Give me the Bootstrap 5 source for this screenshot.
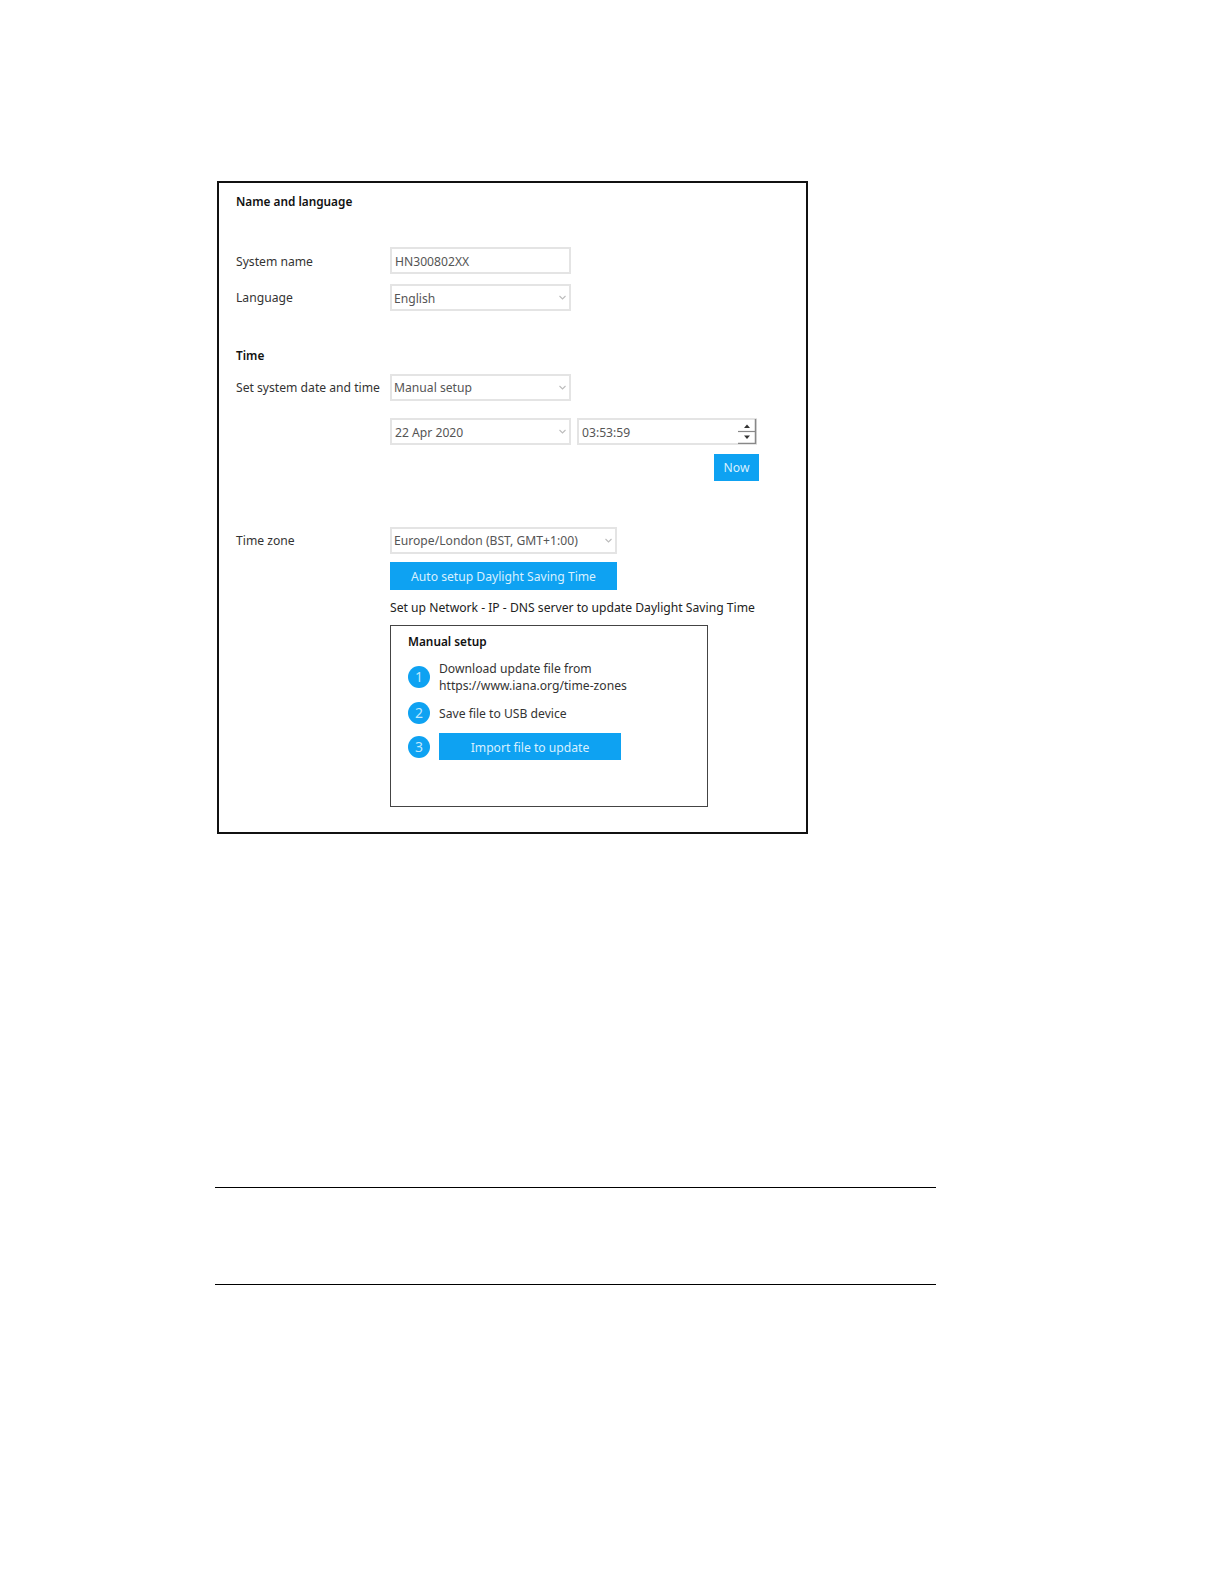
<!DOCTYPE html>
<html lang="en">
<head>
<meta charset="utf-8">
<title>System settings</title>
<link href="https://cdn.jsdelivr.net/npm/bootstrap@5.3.0/dist/css/bootstrap.min.css" rel="stylesheet">
<style>
body { background:#fff; color:#333; font-family:"Noto Sans","Open Sans",sans-serif; font-size:12.15px; line-height:20px; }
.sheet { padding:181px 0 0 217px; }
.frame { width:591px; height:653px; border:2px solid #111; padding:10px 0 0 17px; }
.sect-title { font-weight:600; font-size:11.8px; line-height:17px; color:#111; height:20px; }
.form-row { display:flex; align-items:center; height:27px; }
.gap-sys { margin-top:34px; }
.gap-lang { margin-top:10px; }
.gap-time { margin-top:36px; }
.gap-set { margin-top:7px; }
.gap-date { margin-top:17px; }
.gap-tz { margin-top:46px; }
.lbl { width:154px; flex:none; white-space:nowrap; padding-top:1px; }
.lbl-low { padding-top:2px; }
.fld.form-control, .fld.form-select { width:181px; height:27px; min-height:0; flex:none; border:2px solid #e4e4e4; border-radius:0; font-size:12.15px; line-height:20px; padding:1px 0 0 3px; color:#555; box-shadow:none; }
.fld.form-select { padding-left:2px; background-size:9px 7px; background-position:right 2px center; background-image:url("data:image/svg+xml,%3csvg xmlns='http://www.w3.org/2000/svg' viewBox='0 0 9 7'%3e%3cpath fill='none' stroke='%23bcbcbc' stroke-width='1.1' d='M1.500 2l3 3 3-3'/%3e%3c/svg%3e"); }
.fld-wide.form-select { width:227px; }
.date-pick.form-select { padding-left:3px; padding-top:3px; }
.lang-pick.form-select { padding-top:3px; }
.time-wrap { position:relative; margin-left:6px; flex:none; }
.time-wrap .fld { width:180px; }
.spin { position:absolute; top:1px; right:0; width:20px; height:25px; }
.btn-sky.btn { background:#0ea2f2; border:0; border-radius:0; color:#d8f0ff; font-size:12.15px; line-height:20px; padding:1px 0 0; display:flex; align-items:center; justify-content:center; }
.btn-now { width:45px; height:27px; margin:9px 0 0 478px; }
.btn-auto { width:227px; height:28px; margin:8px 0 0 154px; }
.hint { margin:8px 0 0 154px; white-space:nowrap; color:#222; }
.manual { width:318px; height:182px; margin:7px 0 0 154px; border:1px solid #444; padding:7px 0 0 17px; }
.step-row { display:flex; align-items:center; gap:9px; }
.step-one { margin-top:7px; }
.step-two { margin-top:8px; }
.step-three { margin-top:9px; }
.num { width:22px; height:22px; flex:none; border-radius:50%; background:#0ea2f2; color:#bfe8ff; font-size:14px; display:flex; align-items:center; justify-content:center; }
.step-txt { line-height:17px; white-space:nowrap; }
.btn-imp.btn { width:182px; height:27px; padding-top:2px; }
.rule { width:721px; height:1px; background:#000; margin:0 0 0 215px; }
.rule-a { margin-top:353px; }
.rule-b { margin-top:96px; }
</style>
</head>
<body>
<div class="sheet">
  <div class="frame">
    <div class="sect-title">Name and language</div>
    <div class="form-row gap-sys">
      <div class="lbl lbl-low">System name</div>
      <input class="form-control fld" type="text" value="HN300802XX">
    </div>
    <div class="form-row gap-lang">
      <div class="lbl">Language</div>
      <select class="form-select fld lang-pick"><option>English</option></select>
    </div>
    <div class="sect-title gap-time">Time</div>
    <div class="form-row gap-set">
      <div class="lbl">Set system date and time</div>
      <select class="form-select fld"><option>Manual setup</option></select>
    </div>
    <div class="form-row gap-date">
      <div class="lbl"></div>
      <select class="form-select fld date-pick"><option>22 Apr 2020</option></select>
      <div class="time-wrap">
        <input class="form-control fld" type="text" value="03:53:59">
        <svg class="spin" viewBox="0 0 20 25" aria-hidden="true">
          <path d="M10 5.500l3 3.500h-6z" fill="#333"/>
          <path d="M10 20l3-3.500h-6z" fill="#333"/>
          <path d="M1 12.500h18" stroke="#888" stroke-width="1.200" fill="none"/>
          <path d="M1 24.500h17.500V0" stroke="#888" stroke-width="1.500" fill="none"/>
        </svg>
      </div>
    </div>
    <button type="button" class="btn btn-sky btn-now">Now</button>
    <div class="form-row gap-tz">
      <div class="lbl">Time zone</div>
      <select class="form-select fld fld-wide"><option>Europe/London (BST, GMT+1:00)</option></select>
    </div>
    <button type="button" class="btn btn-sky btn-auto">Auto setup Daylight Saving Time</button>
    <div class="hint">Set up Network - IP - DNS server to update Daylight Saving Time</div>
    <div class="manual">
      <div class="sect-title">Manual setup</div>
      <div class="step-row step-one">
        <span class="num">1</span>
        <div class="step-txt">Download update file from<br>https://www.iana.org/time-zones</div>
      </div>
      <div class="step-row step-two">
        <span class="num">2</span>
        <div class="step-txt">Save file to USB device</div>
      </div>
      <div class="step-row step-three">
        <span class="num">3</span>
        <button type="button" class="btn btn-sky btn-imp">Import file to update</button>
      </div>
    </div>
  </div>
</div>
<div class="rule rule-a"></div>
<div class="rule rule-b"></div>
<script src="https://cdn.jsdelivr.net/npm/bootstrap@5.3.0/dist/js/bootstrap.bundle.min.js"></script>
</body>
</html>
